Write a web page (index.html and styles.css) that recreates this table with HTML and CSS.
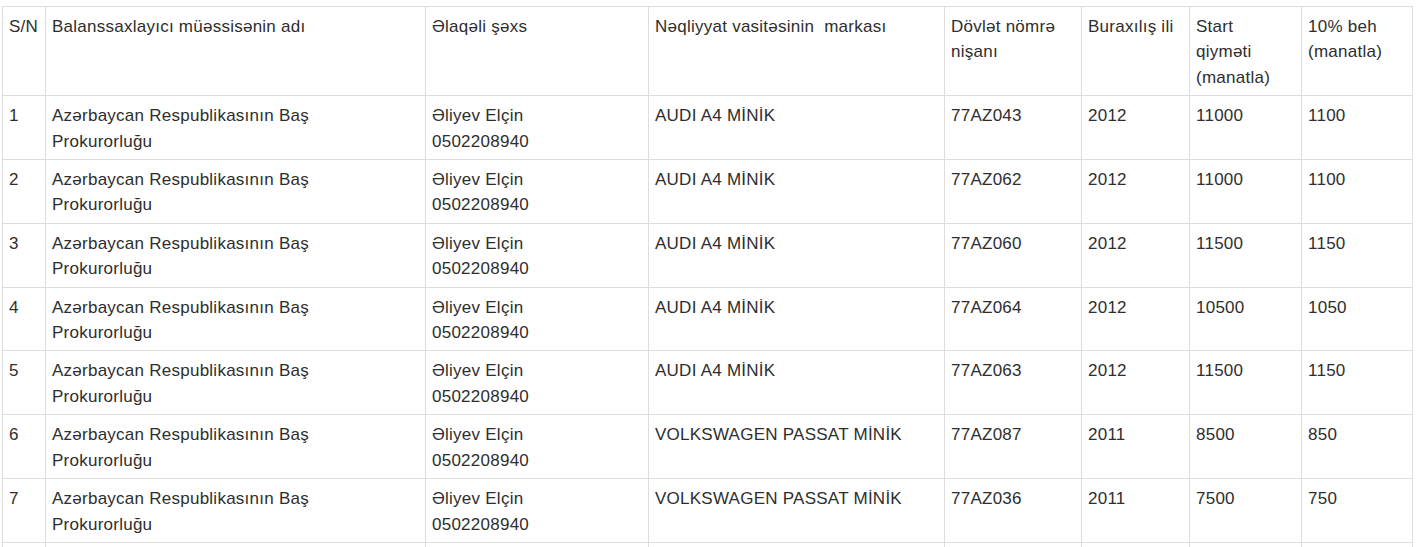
FILE: index.html
```html
<!DOCTYPE html>
<html lang="az">
<head>
<meta charset="utf-8">
<title>Nəqliyyat vasitələri</title>
<link rel="stylesheet" href="styles.css">
</head>
<body>
<div class="wrap">
<table class="vehicles">
<colgroup>
<col class="c-sn"><col class="c-org"><col class="c-person"><col class="c-brand"><col class="c-plate"><col class="c-year"><col class="c-price"><col class="c-dep">
</colgroup>
<thead>
<tr>
<th>S/N</th>
<th>Balanssaxlayıcı müəssisənin adı</th>
<th>Əlaqəli şəxs</th>
<th>Nəqliyyat vasitəsinin&nbsp; markası</th>
<th>Dövlət nömrə<br>nişanı</th>
<th>Buraxılış ili</th>
<th>Start<br>qiyməti<br>(manatla)</th>
<th>10% beh<br>(manatla)</th>
</tr>
</thead>
<tbody>
<tr><td>1</td><td>Azərbaycan Respublikasının Baş<br>Prokurorluğu</td><td>Əliyev Elçin<br>0502208940</td><td>AUDI A4 MİNİK</td><td>77AZ043</td><td>2012</td><td>11000</td><td>1100</td></tr>
<tr><td>2</td><td>Azərbaycan Respublikasının Baş<br>Prokurorluğu</td><td>Əliyev Elçin<br>0502208940</td><td>AUDI A4 MİNİK</td><td>77AZ062</td><td>2012</td><td>11000</td><td>1100</td></tr>
<tr><td>3</td><td>Azərbaycan Respublikasının Baş<br>Prokurorluğu</td><td>Əliyev Elçin<br>0502208940</td><td>AUDI A4 MİNİK</td><td>77AZ060</td><td>2012</td><td>11500</td><td>1150</td></tr>
<tr><td>4</td><td>Azərbaycan Respublikasının Baş<br>Prokurorluğu</td><td>Əliyev Elçin<br>0502208940</td><td>AUDI A4 MİNİK</td><td>77AZ064</td><td>2012</td><td>10500</td><td>1050</td></tr>
<tr><td>5</td><td>Azərbaycan Respublikasının Baş<br>Prokurorluğu</td><td>Əliyev Elçin<br>0502208940</td><td>AUDI A4 MİNİK</td><td>77AZ063</td><td>2012</td><td>11500</td><td>1150</td></tr>
<tr><td>6</td><td>Azərbaycan Respublikasının Baş<br>Prokurorluğu</td><td>Əliyev Elçin<br>0502208940</td><td>VOLKSWAGEN PASSAT MİNİK</td><td>77AZ087</td><td>2011</td><td>8500</td><td>850</td></tr>
<tr><td>7</td><td>Azərbaycan Respublikasının Baş<br>Prokurorluğu</td><td>Əliyev Elçin<br>0502208940</td><td>VOLKSWAGEN PASSAT MİNİK</td><td>77AZ036</td><td>2011</td><td>7500</td><td>750</td></tr>
<tr class="tail"><td></td><td></td><td></td><td></td><td></td><td></td><td></td><td></td></tr>
</tbody>
</table>
</div>
</body>
</html>
```
FILE: styles.css
```css
html, body {
  margin: 0;
  padding: 0;
  background: #fff;
}
.wrap {
  padding: 6px 0 0 2px;
}
.vehicles {
  border-collapse: collapse;
  table-layout: fixed;
  width: 1410px;
  font-family: "Liberation Sans", Arial, sans-serif;
  font-size: 17px;
  line-height: 25.4px;
  letter-spacing: 0.25px;
  color: #2e2e2e;
}
.vehicles th,
.vehicles td {
  border: 1px solid #ddd;
  padding: 7px 6px 5px;
  text-align: left;
  vertical-align: top;
  font-weight: normal;
}
.vehicles .tail td {
  height: 51px;
}
.c-sn { width: 43px; }
.c-org { width: 380px; }
.c-person { width: 223px; }
.c-brand { width: 296px; }
.c-plate { width: 137px; }
.c-year { width: 108px; }
.c-price { width: 112px; }
.c-dep { width: 111px; }
```
